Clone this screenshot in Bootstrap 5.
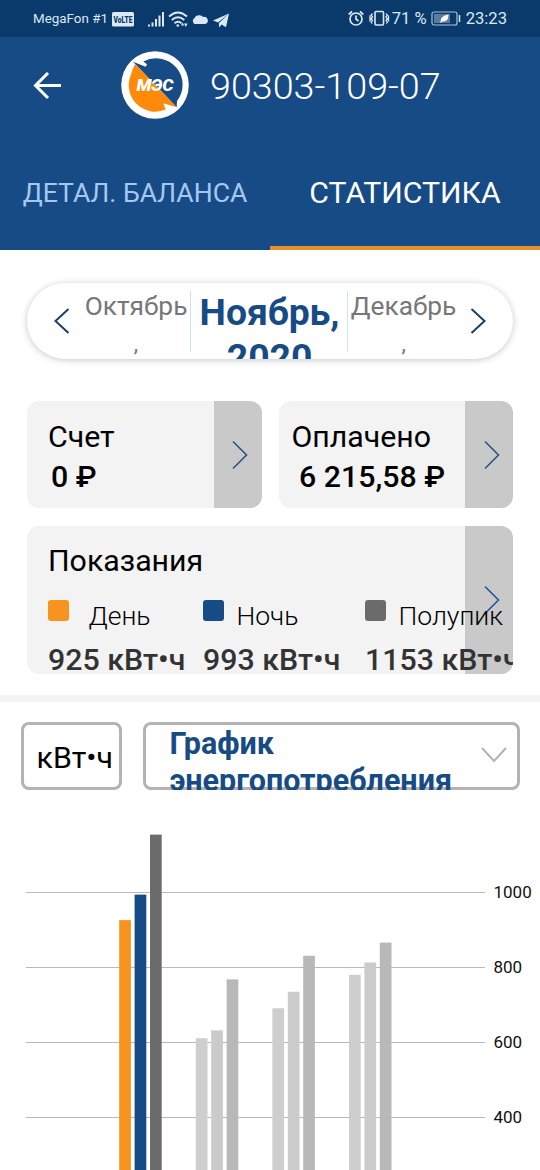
<!DOCTYPE html>
<html lang="ru">
<head>
  <meta charset="UTF-8">
  <meta name="viewport" content="width=device-width, initial-scale=1">
  <title>Статистика</title>
  <link href="https://cdn.jsdelivr.net/npm/bootstrap@5.3.0/dist/css/bootstrap.min.css" rel="stylesheet">

  <style>
    body {
      font-family: Roboto, "Liberation Sans", sans-serif;
      width: 540px;
      height: 1170px;
      overflow: hidden;
      color: #000;
      background: #fff;
      white-space: nowrap;
    }

    svg {
      display: block;
      flex: none;
    }

    /* status bar */
    .status-bar {
      height: 37px;
      padding: 2px 33px 0;
      background: #0a3a6b;
      color: #dbe8f5;
      font-size: 13.4px;
    }

    .status-time {
      font-size: 16.6px;
    }

    .volte {
      margin-left: 4px;
    }

    /* header */
    .app-header {
      background: #174b85;
      color: #fff;
      height: 213px;
    }

    .title-row {
      height: 98px;
      padding-left: 33px;
    }

    .brand-logo {
      margin-left: 57px;
    }

    .account {
      font-size: 37.7px;
      font-weight: 300;
      margin: 1px 0 0 20px;
    }

    .tab-link {
      height: 115px;
      padding-top: 5px;
      border-bottom: 4px solid transparent;
      font-size: 26.6px;
      color: #a5c8f2;
    }

    .tab-link.active {
      font-size: 30.2px;
      color: #fff;
      border-color: #e58f2e;
    }

    /* month switcher */
    .months {
      margin: 33px 27px 0;
      height: 76px;
      border-radius: 38px;
      background: #fff;
      box-shadow: 0 1px 7px rgba(0, 0, 0, .22);
      overflow: hidden;
      text-align: center;
    }

    .month-side {
      font-size: 26.3px;
      line-height: 37px;
      padding: 5px 0 0 1px;
      color: #777;
    }

    .month-next {
      font-size: 22px;
    }

    .month-now {
      font-size: 37.3px;
      line-height: 44px;
      font-weight: 700;
      color: #174b85;
      width: 158px;
      margin-left: 1px;
      height: 61px;
      margin-top: 8px;
      border: solid #d3e1ea;
      border-width: 0 1px;
    }

    .month-now div {
      margin: -1px 0 0 1px;
    }

    .month-year {
      line-height: 47px;
      display: block;
    }

    /* summary tiles */
    .tile {
      background: #f3f3f3;
      border-radius: 12px;
      overflow: hidden;
      font-size: 30.3px;
      line-height: 40px;
    }

    .tile-row {
      margin: 42px 27px 0;
    }

    .tile-go {
      width: 48px;
      flex: none;
      background: #c9c9c9;
      padding-left: 3px;
    }

    .tile-sum {
      height: 107px;
      width: 234.5px;
    }

    .tile-text {
      padding: 15.5px 0 0 21px;
    }

    .tile-paid {
      padding-left: 13px;
    }

    .medium {
      font-weight: 500;
    }

    .tile-readings {
      position: relative;
      height: 148px;
      margin: 18px 27px 0;
    }

    .tile-readings .tile-go {
      position: absolute;
      right: 0;
      top: 0;
      bottom: 0;
    }

    .readings {
      position: relative;
      padding: 15px 0 0 21px;
    }

    .zones {
      display: grid;
      grid-template-columns: 155px 162px 180px;
      padding-top: 16px;
    }

    .swatch {
      width: 21px;
      height: 21px;
      border-radius: 3px;
      margin: 3px 13px 0 -.5px;
      flex: none;
    }

    .swatch-wide {
      margin-right: 20px;
    }

    .zone {
      font-size: 26.5px;
      font-weight: 300;
      line-height: 36px;
      height: 37px;
    }

    .zone span {
      padding-top: 1px;
    }

    .zone-value {
      color: #333;
      font-weight: 500;
      line-height: 40px;
      margin-top: 6px;
    }

    .band {
      height: 7px;
      margin-top: 20.5px;
      background: #f3f3f3;
    }

    /* chart controls */
    .pickers {
      margin: 20.5px 20.5px 0;
    }

    .picker {
      height: 67.5px;
      border-radius: 8px;
      box-shadow: inset 0 0 0 3px #b3b3b3;
      overflow: hidden;
    }

    .picker-unit {
      width: 101.5px;
      font-size: 30.3px;
      padding: 3px 0 0 16px;
    }

    .picker-kind {
      width: 377px;
      padding: 4px 0 0 27px;
      font-size: 30.5px;
      line-height: 36.5px;
      font-weight: 700;
      color: #174b85;
    }

    .picker-arrow {
      margin: 17px 8px 0 auto;
    }
  </style>
</head>
<body>

  <div class="status-bar d-flex align-items-center">
    <span>MegaFon #1</span>
    <svg class="volte" width="23" height="15" viewBox="0 0 23 15">
      <rect width="22" height="14.500" rx="1.500" fill="#dbe8f5"/>
      <text x="1.500" y="11" font-size="9.500" font-weight="900" fill="#0a3a6b" textLength="19" lengthAdjust="spacingAndGlyphs">VoLTE</text>
    </svg>
    <svg width="95" height="20" viewBox="0 0 95 20" fill="#dbe8f5">
      <!-- signal -->
      <path d="M13 14.500h2v2h-2zM16.500 12.500h2v4h-2zM20 9h2v7.500h-2zM23.500 5.500h2v11h-2zM27 2h2v14.500h-2z"/>
      <!-- wifi -->
      <g fill="none" stroke="#dbe8f5" stroke-width="1.800">
        <path d="M34 6.500q9-8 18 0M36.800 10q6.200-5.500 12.500 0M39.500 13.300q3.500-3 7 0"/>
      </g>
      <circle cx="42.800" cy="15.500" r="1.300"/>
      <path d="M46 15.500l1.600-3 1.600 3zM49 13.500h3.600l-1.800 3.400z"/>
      <!-- cloud -->
      <path d="M59.500 14a3.500 3.500 0 0 1 0-6 5 4.500 0 0 1 8.700-1 3.500 3.500 0 0 1 2 7z"/>
      <!-- telegram -->
      <path d="M94 3.500L78 10.500l5 2zM94 3.500L84 13v4.500l2.600-3 4.400 2.700z"/>
    </svg>
    <div class="ms-auto d-flex align-items-center status-time">
      <svg width="44" height="20" viewBox="0 0 44 20" fill="none" stroke="#dbe8f5" stroke-width="1.700">
        <circle cx="8" cy="10" r="6"/>
        <path d="M8 6.500V10l2.500 2M.700 5.500L4 2.500M15.300 5.500L12 2.500"/>
        <rect x="27" y="2.500" width="8.500" height="13.500" rx="1" stroke-width="1.600"/>
        <path d="M24.500 4.500l-1.400 1.700 1.400 1.700-1.400 1.700 1.400 1.700-1.400 1.700 1 1.500M38 4.500l1.400 1.700L38 7.900l1.400 1.700L38 11.300l1.400 1.700-1 1.500M22 6.500v6M40.500 6.500v6" stroke-width="1.300"/>
      </svg>
      <span>71 %</span>
      <svg class="ms-1" width="31" height="16" viewBox="0 0 31 16">
        <rect x="1" y="1" width="25" height="13" rx="2" fill="none" stroke="#a9c0d8" stroke-width="1.200"/>
        <rect x="3" y="3" width="16" height="9" fill="#5b7c9f"/>
        <path d="M9.500 11q-.500-6 8-7.500 0 7.500-6 7l-2 1.500z" fill="#fff"/>
        <path d="M28.500 4v7" stroke="#dbe8f5" stroke-width="1.500"/>
      </svg>
      <span class="ms-1">23:23</span>
    </div>
  </div>

  <header class="app-header">
    <div class="title-row d-flex align-items-center">
      <svg width="30" height="28" viewBox="0 0 30 28" fill="none" stroke="#fff" stroke-width="3">
        <path d="M28 13.500H3M15 1L2.500 13.500 15 26"/>
      </svg>
      <svg class="brand-logo" width="70" height="70" viewBox="0 0 70 70">
        <circle cx="35" cy="34" r="33.800" fill="#fff"/>
        <path d="M13 10.700L25.700 15.700 27 13.200 23.300 10.500A26.500 26.500 0 0 1 57 50L56.700 56.300z" fill="#174b85"/>
        <path d="M15 13L56.700 56.300 43.300 52.300 45.700 58.500A26.500 26.500 0 0 1 11 23.500Q12 19.500 15 13z" fill="#ff8a0a"/>
        <text x="16.500" y="39.500" font-size="16.500" font-weight="900" font-style="italic" fill="#fff" textLength="37" lengthAdjust="spacingAndGlyphs">МЭС</text>
      </svg>
      <span class="account">90303-109-07</span>
    </div>
    <nav class="row g-0">
      <div class="col-6 tab-link d-flex align-items-center justify-content-center">ДЕТАЛ. БАЛАНСА</div>
      <div class="col-6 tab-link active d-flex align-items-center justify-content-center">СТАТИСТИКА</div>
    </nav>
  </header>

  <div class="months d-flex">
    <svg class="align-self-center" width="55" height="30" viewBox="0 0 55 30" fill="none" stroke="#1b4169" stroke-width="2">
      <path d="M41.500 3L28.500 15 41.500 27"/>
    </svg>
    <div class="month-side flex-fill"><div>Октябрь</div><div class="month-next">,</div></div>
    <div class="month-now"><div>Ноябрь,<span class="month-year">2020</span></div></div>
    <div class="month-side flex-fill"><div>Декабрь</div><div class="month-next">,</div></div>
    <svg class="align-self-center" width="55" height="30" viewBox="0 0 55 30" fill="none" stroke="#1b4169" stroke-width="2">
      <path d="M13.500 3L26.500 15 13.500 27"/>
    </svg>
  </div>

  <div class="tile-row d-flex justify-content-between">
    <div class="tile tile-sum d-flex">
      <div class="tile-text flex-fill">
        <div>Счет</div>
        <div class="medium">&hairsp;0 ₽</div>
      </div>
      <div class="tile-go d-flex align-items-center justify-content-center">
        <svg width="20" height="30" viewBox="0 0 20 30" fill="none" stroke="#285584" stroke-width="1.600"><path d="M4 1.500L17.500 15 4 28.500"/></svg>
      </div>
    </div>
    <div class="tile tile-sum d-flex">
      <div class="tile-text tile-paid flex-fill">
        <div>Оплачено</div>
        <div class="medium">&nbsp;6 215,58 ₽</div>
      </div>
      <div class="tile-go d-flex align-items-center justify-content-center">
        <svg width="20" height="30" viewBox="0 0 20 30" fill="none" stroke="#285584" stroke-width="1.600"><path d="M4 1.500L17.500 15 4 28.500"/></svg>
      </div>
    </div>
  </div>

  <div class="tile tile-readings">
    <div class="tile-go d-flex align-items-center justify-content-center">
      <svg width="20" height="30" viewBox="0 0 20 30" fill="none" stroke="#23549b" stroke-width="1.600"><path d="M4 1.500L17.500 15 4 28.500"/></svg>
    </div>
    <div class="readings">
      <div>Показания</div>
      <div class="zones">
        <div>
          <div class="zone d-flex"><i class="swatch swatch-wide" style="background: #f7931e"></i><span>День</span></div>
          <div class="zone-value">925 кВт•ч</div>
        </div>
        <div>
          <div class="zone d-flex"><i class="swatch" style="background: #174b85"></i><span>Ночь</span></div>
          <div class="zone-value">993 кВт•ч</div>
        </div>
        <div>
          <div class="zone d-flex"><i class="swatch" style="background: #6b6b6b"></i><span>Полупик</span></div>
          <div class="zone-value">1153 кВт•ч</div>
        </div>
      </div>
    </div>
  </div>

  <div class="band"></div>

  <div class="pickers d-flex justify-content-between">
    <div class="picker picker-unit d-flex align-items-center">кВт•ч</div>
    <div class="picker picker-kind d-flex">
      <div>График<br>энергопотребления</div>
      <svg class="picker-arrow" width="34" height="24" viewBox="0 0 34 24" fill="none" stroke="#b3b3b3" stroke-width="2"><path d="M4 5l12 13L28 5"/></svg>
    </div>
  </div>

  <svg id="chart" width="540" height="380" viewBox="0 790 540 380"></svg>

  <script>
    const groups = [
      { values: [925, 993, 1153], colors: ['#f7931e', '#174b85', '#6b6b6b'] },
      { values: [610, 631, 767], colors: ['#cecece', '#cbcbcb', '#b8b8b8'] },
      { values: [690, 734, 830], colors: ['#cecece', '#cbcbcb', '#b8b8b8'] },
      { values: [779, 812, 865], colors: ['#cecece', '#cbcbcb', '#b8b8b8'] }
    ];
    const zeroY = 1267;
    const scale = 0.375;
    let out = '';

    [1000, 800, 600, 400].forEach(v => {
      const y = zeroY - v * scale;
      out += `<rect x="26" y="${y}" width="459" height="1" fill="#b9b9b9"/>
        <text x="493.500" y="${y + 5.5}" font-size="17" fill="#111">${v}</text>`;
    });

    groups.forEach((group, g) => {
      group.values.forEach((v, i) => {
        const h = v * scale;
        out += `<rect x="${119.2 + g * 76.6 + i * 15.4}" y="${zeroY - h}" width="11.700" height="${h}" fill="${group.colors[i]}"/>`;
      });
    });

    document.getElementById('chart').innerHTML = out;
  </script>

  <script src="https://cdn.jsdelivr.net/npm/bootstrap@5.3.0/dist/js/bootstrap.bundle.min.js"></script>
</body>
</html>
